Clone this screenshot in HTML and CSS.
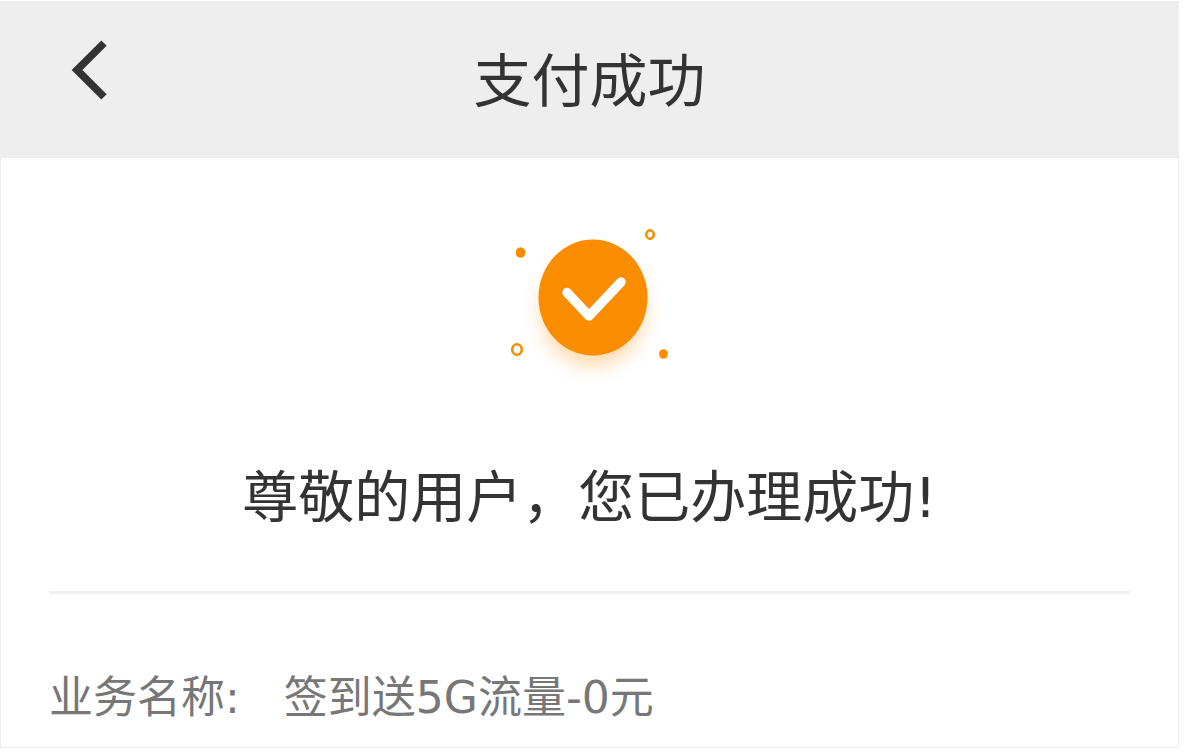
FILE: index.html
```html
<!DOCTYPE html>
<html lang="zh-CN">
<head>
    <meta charset="UTF-8">
    <meta name="viewport" content="width=device-width, initial-scale=1.0">
    <title>支付成功</title>
    <link rel="stylesheet" href="styles.css">
</head>
<body>
    <div class="page">
        <header class="header">
            <a class="back" href="#" aria-label="返回">
                <svg width="36" height="60" viewBox="0 0 36 60" fill="none" stroke="#333" stroke-width="7.5" aria-hidden="true">
                    <path d="M33 3.2 L6 30 L33 56.8"/>
                </svg>
            </a>
            <h1>支付成功</h1>
        </header>

        <main class="content">
            <svg class="success-icon" width="200" height="190" viewBox="0 0 200 190" aria-hidden="true">
                <defs>
                    <filter id="glow" x="-30%" y="-30%" width="160%" height="160%">
                        <feGaussianBlur stdDeviation="10"/>
                    </filter>
                </defs>
                <ellipse cx="103" cy="101" rx="51" ry="54" fill="#fa8c00" opacity="0.35" filter="url(#glow)"/>
                <ellipse cx="103" cy="87.5" rx="54.5" ry="58" fill="#fa8c00"/>
                <path d="M77 82.5 L99 106 L131 72" fill="none" stroke="#fff" stroke-width="9.5" stroke-linecap="round" stroke-linejoin="round"/>
                <g fill="#fa8c00">
                    <ellipse cx="30.5" cy="42.5" rx="4.8" ry="5.3"/>
                    <ellipse cx="173.5" cy="144" rx="4.4" ry="4.8"/>
                </g>
                <g fill="#fff" stroke="#fa8c00" stroke-width="2.6">
                    <ellipse cx="160" cy="24.5" rx="3.7" ry="4.2"/>
                    <ellipse cx="27" cy="139.5" rx="4.8" ry="5.3"/>
                </g>
            </svg>

            <h2>尊敬的用户，您已办理成功!</h2>

            <dl class="info">
                <dt>业务名称:</dt>
                <dd>签到送5G流量-0元</dd>
            </dl>
        </main>
    </div>
</body>
</html>
```
FILE: styles.css
```css
* {
    box-sizing: border-box;
}

body {
    margin: 0;
    padding: 1px 10px 4px 0;
    min-height: 100vh;
    display: flex;
    background: #fff;
    color: #333;
    font-family: "DejaVu Sans", "Noto Sans CJK SC", sans-serif;
}

.page {
    flex: 1;
    display: flex;
    flex-direction: column;
}

.header {
    display: grid;
    grid-template-columns: 107px 1fr 107px;
    padding: 39px 0 34px;
    background: #eee;
}

.back {
    display: flex;
    justify-content: flex-end;
    align-items: flex-start;
}

h1 {
    margin: 0;
    font-size: 58px;
    font-weight: normal;
    line-height: 84px;
    text-align: center;
}

.content {
    flex: 1;
    padding: 52px 48px 0;
    border: 1px solid #eee;
    border-top: none;
}

.success-icon {
    display: block;
    margin: 0 auto;
}

h2 {
    margin: 0;
    padding: 58px 0 53px;
    border-bottom: 3px solid #f0f0f0;
    font-size: 56px;
    font-weight: normal;
    line-height: 80px;
    text-align: center;
}

.info {
    display: flex;
    gap: 44px;
    margin: 74px 0 0;
    font-size: 44px;
    line-height: 60px;
    color: #777;
}

.info dd {
    margin: 0;
}
```
